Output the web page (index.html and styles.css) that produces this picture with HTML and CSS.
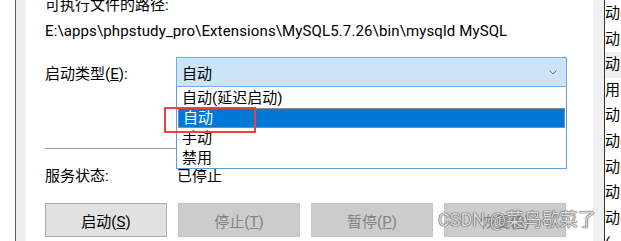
FILE: index.html
```html
<!DOCTYPE html>
<html lang="zh-CN">
<head>
    <meta charset="UTF-8">
    <title>MySQL 属性</title>
    <link rel="stylesheet" href="styles.css">
</head>
<body>
    <div class="screen">
        <div class="edge-left"></div>

        <div class="dialog">
            <div class="line first">可执行文件的路径:</div>
            <div class="line path">E:\apps\phpstudy_pro\Extensions\MySQL5.7.26\bin\mysqld MySQL</div>

            <div class="field">
                <span class="label">启动类型(<u>E</u>):</span>
                <div class="combo">
                    <div class="combo-box">
                        <span>自动</span>
                        <svg class="chevron" width="8" height="5" viewBox="0 0 8 5">
                            <polyline points="0.5,0.5 4,4 7.5,0.5" fill="none" stroke="#707070" stroke-width="1"/>
                        </svg>
                    </div>
                    <ul class="dropdown">
                        <li>自动(延迟启动)</li>
                        <li class="selected">自动</li>
                        <li>手动</li>
                        <li>禁用</li>
                    </ul>
                    <!-- 红框标注 -->
                    <div class="mark"></div>
                </div>
            </div>

            <div class="sep"></div>

            <div class="field status">
                <span class="label">服务状态:</span>
                <span>已停止</span>
            </div>

            <div class="buttons">
                <button class="btn">启动(<u>S</u>)</button>
                <button class="btn" disabled>停止(<u>T</u>)</button>
                <button class="btn" disabled>暂停(<u>P</u>)</button>
                <button class="btn" disabled>恢复(<u>R</u>)</button>
            </div>

            <div class="watermark">CSDN @菜鸟歇菜了</div>
        </div>

        <div class="edge-right"></div>

        <div class="behind">
            <div class="row">动(延迟启动)</div>
            <div class="row">动</div>
            <div class="row hover">动</div>
            <div class="row">用</div>
            <div class="row">动</div>
            <div class="row">动(延迟启动)</div>
            <div class="row">动(延迟启动)</div>
            <div class="row">动</div>
            <div class="row">动(延迟启动)</div>
            <div class="row">(</div>
        </div>
    </div>
</body>
</html>
```

FILE: styles.css
```css
body {
    margin: 0;
    background: #fff;
    font-family: "Segoe UI", Roboto, "Noto Sans CJK SC", sans-serif;
    font-size: 15px;
    color: #000;
}
.screen {
    display: flex;
    width: 621px;
    height: 241px;
    overflow: hidden;
}
.edge-left {
    margin-left: 15px;
    width: 10px;
    border-left: 1px solid #5f5f5f;
    background-color: #f0f0f0;
}
.dialog {
    position: relative;
    width: 548px;
    padding-left: 19px;
    background: #fff;
}
.line {
    height: 20px;
    line-height: 20px;
    white-space: nowrap;
}
.line.first {
    margin-top: -5px;
    margin-bottom: 6px;
}
.line.path {
    letter-spacing: 0.13px;
}
.field {
    display: flex;
    align-items: center;
    margin-top: 16px;
}
.field .label {
    width: 131px;
    flex-shrink: 0;
}
.combo {
    position: relative;
    width: 391px;
}
.combo-box {
    display: flex;
    align-items: center;
    justify-content: space-between;
    height: 28px;
    padding: 0 9px 0 5px;
    border: 1px solid #72aee6;
    background-color: #cce4f7;
}
.chevron {
    display: block;
}
.dropdown {
    position: absolute;
    top: 100%;
    left: 0;
    right: 0;
    margin: 0;
    padding: 1px 0 0;
    list-style: none;
    border: 1px solid #5d9fdc;
    border-top: none;
    background: #fff;
    z-index: 2;
}
.dropdown li {
    height: 20px;
    line-height: 20px;
    padding-left: 5px;
    box-sizing: border-box;
}
.dropdown li.selected {
    background-color: #0078d7;
    color: #fff;
    border: 1px solid #8a8a8a;
    margin: 0 1px;
    padding-left: 4px;
    line-height: 18px;
}
.mark {
    position: absolute;
    left: -12px;
    top: 50px;
    width: 88px;
    height: 22px;
    border: 2px solid #ee4040;
    z-index: 3;
}
.sep {
    height: 1px;
    margin-top: 61px;
    width: 521px;
    background-color: #a0a0a0;
}
.field.status {
    margin-top: 17px;
    height: 20px;
    line-height: 20px;
}
.field.status span + span {
    padding-left: 1px;
}
.buttons {
    display: flex;
    gap: 11px;
    margin-top: 17px;
}
.btn {
    width: 122px;
    height: 34px;
    padding: 0;
    border: 1px solid #adadad;
    background-color: #e1e1e1;
    font: inherit;
    color: #000;
}
.btn:disabled {
    border-color: #c4c4c4;
    background-color: #cccccc;
    color: #838383;
}
.watermark {
    position: absolute;
    left: 412px;
    top: 208px;
    font-size: 18px;
    line-height: 24px;
    white-space: nowrap;
    color: rgba(245, 245, 245, 0.85);
    text-shadow: 0 0 1px #555, 0 0 1px #555, 0 0 1px #555;
    z-index: 4;
}
.edge-right {
    width: 11px;
    border-right: 1px solid #333;
    background-color: #f0f0f0;
}
.behind {
    width: 16px;
    padding-top: 1px;
    overflow: hidden;
    background: #fff;
}
.behind .row {
    height: 25.6px;
    line-height: 25.6px;
    white-space: nowrap;
}
.behind .row.hover {
    background-color: #f0f0f0;
}
```
